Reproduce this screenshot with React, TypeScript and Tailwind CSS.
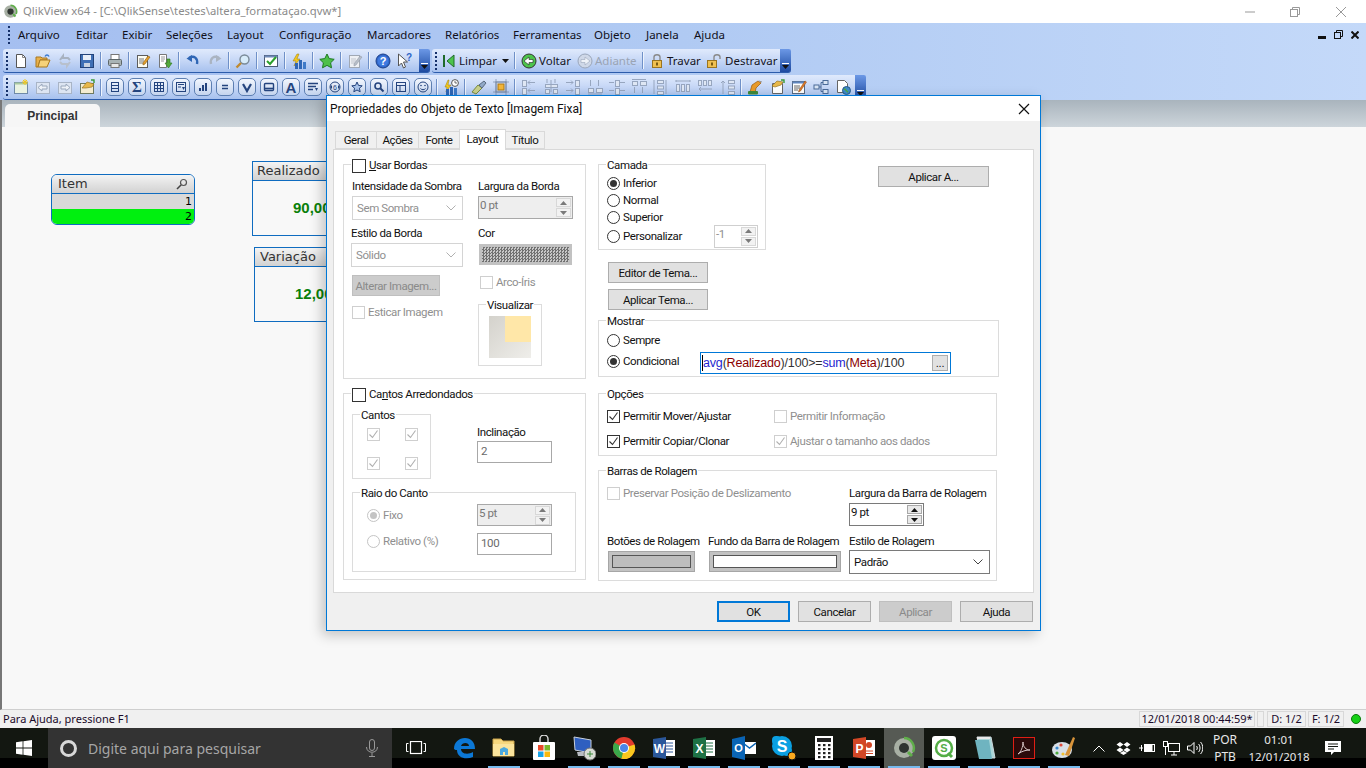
import React from 'react';

const W = ({ children, s = 16 }: { children: React.ReactNode; s?: number }) => (
  <svg width={s} height={s} viewBox={`0 0 ${s} ${s}`} fill="none">
    {children}
  </svg>
);

/* ---------- toolbar icons ---------- */
const icons: Record<string, React.ReactNode> = {
  new: <W><path d="M3.5 1.5h6l3 3v10h-9z" fill="#fff" stroke="#555" /><path d="M9.5 1.5v3h3" stroke="#888" /></W>,
  open: <W><path d="M1 4h5l1 1h5v2H5L3 14H1z" fill="#e8b04a" stroke="#a87820" /><path d="M3 14l2-7h10l-3 7z" fill="#f6d27a" stroke="#a87820" /><path d="M10 3.5c1-2 3-2 4 0" stroke="#3a7ad0" strokeWidth="1.4" /></W>,
  refresh: <W><path d="M3 7l3-4v2h5l2 2" stroke="#a8b2c0" strokeWidth="2" /><path d="M13 9l-3 4v-2H5L3 9" stroke="#b8c0cc" strokeWidth="2" /></W>,
  save: <W><rect x="1.5" y="1.5" width="13" height="13" fill="#3f6fb5" stroke="#23437a" /><rect x="4" y="2" width="8" height="5" fill="#e8eef8" /><rect x="5" y="10" width="6" height="4" fill="#c8d2e0" /></W>,
  print: <W><rect x="4" y="1.5" width="8" height="5" fill="#fff" stroke="#777" /><rect x="1.5" y="6.5" width="13" height="6" rx="1" fill="#a9b3b5" stroke="#5c6668" /><rect x="4" y="10.5" width="8" height="4" fill="#e8e8e8" stroke="#777" /></W>,
  notes: <W><rect x="2.5" y="2.5" width="10" height="12" fill="#fdfdf4" stroke="#5c5c5c" /><path d="M4 6h5M4 8h5M4 10h4" stroke="#777" /><path d="M8 10l5-7 2 1-5 7-2 1z" fill="#e6a02c" stroke="#8a5a10" strokeWidth=".6" /></W>,
  down: <W><path d="M2.5 1.5h7v13h-7z" fill="#fff" stroke="#777" /><path d="M4 4h4M4 6h4M4 8h3" stroke="#999" /><path d="M10 6h3v4h2l-3.5 5L8 10h2z" fill="#55a83c" stroke="#2c7a1a" strokeWidth=".6" /></W>,
  undo: <W><path d="M4 5c5-3 9 0 8 6" stroke="#2f66b5" strokeWidth="2.4" /><path d="M1.5 5.5L7 2v7z" fill="#2f66b5" /></W>,
  redo: <W><path d="M12 5C7 2 3 5 4 11" stroke="#aab4c2" strokeWidth="2.4" /><path d="M14.5 5.5L9 2v7z" fill="#aab4c2" /></W>,
  search: <W><circle cx="9.5" cy="6.5" r="4.5" fill="#d8ecfa" stroke="#7a8a98" strokeWidth="1.4" /><path d="M6 10l-4.5 4.5" stroke="#c08a30" strokeWidth="2.4" /></W>,
  check: <W><rect x="1.5" y="2.5" width="13" height="11" fill="#fff" stroke="#4a5a74" /><rect x="1.5" y="2.5" width="13" height="2" fill="#6f89b8" /><path d="M4 8l3 3 6-7" stroke="#2ca02c" strokeWidth="2" /></W>,
  bars: <W><path d="M6 1L2 8h3L3 13l6-7H6l2-5z" fill="#f2c81e" stroke="#9a7a10" strokeWidth=".5" /><rect x="4" y="10" width="3" height="6" fill="#2f66b5" /><rect x="8" y="7" width="3" height="9" fill="#2f66b5" /><rect x="12" y="9" width="3" height="7" fill="#3f7ac8" /></W>,
  star: <W><path d="M8 1l2.2 4.6 5 .7-3.6 3.5.9 5L8 12.4l-4.5 2.4.9-5L.8 6.3l5-.7z" fill="#4ec04a" stroke="#1f7a22" /></W>,
  edit: <W><rect x="2.5" y="2.5" width="10" height="12" fill="#eef0f4" stroke="#a0a8b4" /><path d="M4 6h5M4 8h5M4 10h4" stroke="#c0c4cc" /><path d="M7 11l6-8 2 1-6 8-2 1z" fill="#b8bec8" stroke="#8a92a0" strokeWidth=".5" /></W>,
  help: <W><circle cx="8" cy="8" r="7" fill="#2f66c8" stroke="#1c3f8a" /><circle cx="8" cy="8" r="5.4" fill="#3f7ae0" /><text x="8" y="12" textAnchor="middle" fontSize="11" fontWeight="700" fill="#fff" fontFamily="Liberation Sans">?</text></W>,
  whats: <W><path d="M1.5 1v12l3-3 2 5 2-1-2-5h4z" fill="#fff" stroke="#555" /><text x="12" y="8" textAnchor="middle" fontSize="10" fontWeight="700" fill="#2f66c8" fontFamily="Liberation Sans">?</text></W>,
  sheetNew: <W><rect x="1.5" y="3.5" width="13" height="11" fill="#eaf3e2" stroke="#6f8aa8" /><rect x="1.5" y="3.5" width="13" height="2" fill="#a8c8a0" /><path d="M12 0v6M9 3h6M10 1l4 4M14 1l-4 4" stroke="#f2c81e" /></W>,
  back: <W><rect x="1.5" y="3.5" width="13" height="11" fill="#dde5f2" stroke="#a8b4c6" /><path d="M3 8.5l4-3.5v2h5v3H7v2z" fill="#eef2f8" stroke="#9aa8bc" /></W>,
  forward: <W><rect x="1.5" y="3.5" width="13" height="11" fill="#dde5f2" stroke="#a8b4c6" /><path d="M13 8.5L9 5v2H4v3h5v2z" fill="#eef2f8" stroke="#9aa8bc" /></W>,
  sheetProps: <W><rect x="1.5" y="4.5" width="13" height="10" fill="#f4ecd0" stroke="#6f7a60" /><path d="M3 9l5-6 7 2-2 3-6 1z" fill="#e8b84a" stroke="#8a6a18" strokeWidth=".6" /><path d="M12 1h3v3" stroke="#3a9a3a" strokeWidth="1.4" /></W>,
  barsClock: <W><path d="M5 1L2 8h2L3 13l5-7H5l1-5z" fill="#f2c81e" stroke="#9a7a10" strokeWidth=".5" /><rect x="3" y="10" width="3" height="6" fill="#2f66b5" /><rect x="7" y="8" width="3" height="8" fill="#2f66b5" /><rect x="11" y="9" width="3" height="7" fill="#3f7ac8" /><circle cx="12" cy="4" r="3.4" fill="#fff" stroke="#555" /><path d="M12 2v2h2" stroke="#333" strokeWidth=".7" /></W>,
  brush: <W><path d="M1 13l6-7 4 3-6 6z" fill="#c8d08c" stroke="#7a8a40" /><path d="M8 6l5-4 2 2-4 5z" fill="#8fa8c8" stroke="#5a6a80" /></W>,
  select: <W><rect x="3" y="3" width="10" height="10" fill="none" stroke="#7a8aa8" /><rect x="5" y="5" width="6" height="6" fill="#f2b53a" stroke="#b07a10" /><path d="M3 0v16M13 0v16M0 3h16M0 13h16" stroke="#7a8aa8" strokeWidth=".7" /></W>,
  robot: <W><path d="M3 13l2-7 6-4 3 2-5 5-1 5z" fill="#e89a2a" stroke="#9a5a10" strokeWidth=".7" /><rect x="1" y="12" width="10" height="3.5" rx="1" fill="#3f8a3a" /><path d="M12 2l3 1" stroke="#999" /></W>,
  docTag: <W><path d="M3.5 4.5h10v10h-10z" fill="#fff" stroke="#666" /><path d="M3 7l5-5 6 1-2 3-6 2z" fill="#e8b84a" stroke="#8a6a18" strokeWidth=".6" /><path d="M12 1h3v3" stroke="#3a9a3a" strokeWidth="1.4" /></W>,
  formEdit: <W><rect x="1.5" y="2.5" width="12" height="12" fill="#fff" stroke="#5a6a80" /><rect x="1.5" y="2.5" width="12" height="2" fill="#5f86c0" /><path d="M3 7h6M3 9h6M3 11h4" stroke="#666" /><path d="M8 11l6-9 1.5 1-6 9-2 1z" fill="#e07a2a" stroke="#8a4a10" strokeWidth=".5" /></W>,
  nodes: <W><rect x="1" y="6" width="5" height="4" fill="#d8e4f4" stroke="#4a6a98" /><rect x="10" y="1.5" width="5" height="4" fill="#d8e4f4" stroke="#4a6a98" /><rect x="10" y="10.5" width="5" height="4" fill="#d8e4f4" stroke="#4a6a98" /><path d="M6 8h2V3.5h2M8 8v4.5h2" stroke="#4a6a98" /></W>,
  webDoc: <W><path d="M2.5 1.5h7l3 3v9h-10z" fill="#fff" stroke="#666" /><circle cx="11.5" cy="11.5" r="4" fill="#3f8ac8" stroke="#245a8a" /><path d="M9 10c2 0 2 2 4 3" stroke="#4caa3c" strokeWidth="1.4" /></W>,
};

const Ic = ({ n }: { n: string }) => (
  <span className="w-[22px] flex items-center justify-center shrink-0">{icons[n]}</span>
);

const Sep = () => (
  <span className="w-[6px] flex justify-center shrink-0">
    <span className="block w-[2px] h-[17px] border-l border-[#6f90c8] bg-[#eef4fd]" />
  </span>
);

const Grip = () => (
  <span className="w-[7px] flex flex-col items-center gap-[2px] shrink-0">
    <i className="block w-[2px] h-[2px] bg-[#15306a]" />
    <i className="block w-[2px] h-[2px] bg-[#15306a]" />
    <i className="block w-[2px] h-[2px] bg-[#15306a]" />
    <i className="block w-[2px] h-[2px] bg-[#15306a]" />
    <i className="block w-[2px] h-[2px] bg-[#15306a]" />
  </span>
);

const Overflow = () => (
  <span className="ml-auto w-[11px] self-stretch rounded-r-[2px] bg-linear-to-b from-[#6c98e6] to-[#1d4aa0] flex flex-col justify-end items-center pb-[3px] gap-[1px]">
    <i className="block w-[7px] h-px bg-white" />
    <svg width="7" height="4" viewBox="0 0 7 4"><path d="M0 0h7L3.5 4z" fill="#111" /></svg>
  </span>
);

/* object buttons of the third toolbar */
const ObjBtn = ({ children }: { children: React.ReactNode }) => (
  <span className="w-[22px] flex items-center justify-center shrink-0">
    <span className="w-[18px] h-[18px] rounded-[5px] border border-[#5d7fb2] bg-linear-to-b from-[#f2f6fd] to-[#c4d4ee] flex items-center justify-center">
      {children}
    </span>
  </span>
);

const ink = '#24447e';
const objGlyphs: React.ReactNode[] = [
  <W s={12}><rect x="2.5" y="1.5" width="7" height="9" stroke={ink} /><path d="M3 4.5h6M3 7.5h6" stroke={ink} /></W>,
  <span className="text-[15px] leading-none font-bold text-[#24447e] font-['Liberation_Serif',serif]">Σ</span>,
  <W s={12}><rect x="1.5" y="1.5" width="9" height="9" stroke={ink} /><path d="M4.5 2v8M7.5 2v8M2 4.5h8M2 7.5h8" stroke={ink} /></W>,
  <W s={12}><rect x="1.5" y="1.5" width="9" height="9" stroke={ink} /><path d="M3 3.5h6M3 6h3" stroke={ink} /><path d="M7 6h3l-1.5 3z" fill={ink} /></W>,
  <W s={12}><rect x="2" y="7" width="2" height="3" fill={ink} /><rect x="5" y="4" width="2" height="6" fill={ink} /><rect x="8" y="2" width="2" height="8" fill={ink} /></W>,
  <W s={12}><path d="M3 4.5h6M3 7.5h6" stroke={ink} strokeWidth="1.6" /></W>,
  <W s={12}><path d="M2 3l4 7 4-7" stroke={ink} strokeWidth="2.2" /></W>,
  <W s={12}><rect x="1.5" y="2.5" width="9" height="7" rx="1" stroke={ink} strokeWidth="1.4" /><path d="M2 7.5h8" stroke={ink} strokeWidth="1.6" /></W>,
  <span className="text-[15px] leading-none font-bold text-[#24447e] font-['Liberation_Sans',sans-serif]">A</span>,
  <W s={12}><path d="M1 2.5h10M1 5.5h8M1 8.5h5" stroke={ink} strokeWidth="1.4" /><path d="M8 7h3l-1.5 3z" fill={ink} /></W>,
  <W s={12}><circle cx="6" cy="6" r="5" stroke={ink} /><path d="M1 6l2-2v4zM11 6L9 4v4z" fill={ink} /><text x="6" y="9" textAnchor="middle" fontSize="7" fill={ink} fontFamily="Liberation Sans">6</text></W>,
  <W s={12}><path d="M6 1l1.5 3.4 3.7.4-2.8 2.4.8 3.6L6 9l-3.2 1.8.8-3.6L.8 4.8l3.7-.4z" stroke={ink} fill="#a9c3ea" /></W>,
  <W s={12}><circle cx="5" cy="5" r="3" stroke={ink} strokeWidth="1.6" /><path d="M7.5 7.5l3 3" stroke={ink} strokeWidth="2" /></W>,
  <W s={12}><rect x="1.5" y="1.5" width="9" height="9" stroke={ink} /><path d="M2 4.5h8M5 5v5" stroke={ink} /></W>,
  <W s={12}><circle cx="6" cy="6" r="5" stroke={ink} /><circle cx="4" cy="4.5" r=".8" fill={ink} /><circle cx="8" cy="4.5" r=".8" fill={ink} /><path d="M3.5 7.5c1 1.6 4 1.6 5 0" stroke={ink} /></W>,
];

/* alignment buttons, greyed out since nothing is selected */
const al = '#97a6bf';
const aligns: { r: number[][]; a: string }[] = [
  { r: [[1, 1, 4, 6], [1, 9, 4, 6]], a: 'M7 3.5h7M7 11.5h7M7 3.5l2-2M7 3.5l2 2M7 11.5l2-2M7 11.5l2 2' },
  { r: [[2, 5, 12, 3], [2, 10, 4, 4], [10, 10, 4, 4]], a: 'M4 0v4M12 0v4M8 1v12' },
  { r: [[10, 1, 4, 6], [10, 9, 4, 6]], a: 'M1 3.5h7M1 11.5h7M8 3.5L6 1.5M8 3.5L6 5.5M8 11.5l-2-2M8 11.5l-2 2' },
  { r: [[1, 9, 5, 4], [9, 9, 6, 4]], a: 'M3.5 1v6M11.5 1v6M1 15h14' },
  { r: [[6, 1, 4, 6], [6, 9, 4, 6]], a: 'M0 3.5h5M11 3.5h5M0 11.5h5M11 11.5h5' },
  { r: [[1, 2, 5, 4], [9, 2, 6, 4]], a: 'M1 .5h14M3.5 8v6M11.5 8v6' },
  { r: [[4, 1, 6, 3], [4, 6.5, 6, 3], [4, 12, 6, 3]], a: 'M1 1v14M13 1v14' },
  { r: [[1, 5, 3, 7], [6, 5, 3, 7], [11, 5, 3, 7]], a: 'M1 2h14M1 1v2M15 1v2' },
  { r: [[1, 1, 3, 5], [6, 1, 3, 5], [11, 1, 3, 5]], a: 'M2 10h13M2 10l2-2M2 10l2 2' },
  { r: [[9, 1, 6, 3], [9, 6.5, 6, 3], [9, 12, 6, 3]], a: 'M4 15V2M4 2L2 4M4 2l2 2' },
];
const AlignIcon = ({ r, a }: { r: number[][]; a: string }) => (
  <span className="w-[22px] flex items-center justify-center shrink-0">
    <W>
      {r.map((x, i) => (
        <rect key={i} x={x[0] + 0.5} y={x[1] + 0.5} width={x[2]} height={x[3]} fill="#dfe7f4" stroke={al} />
      ))}
      <path d={a} stroke={al} />
    </W>
  </span>
);

const Toolbar = ({ className, children }: { className: string; children: React.ReactNode }) => (
  <div className={`flex items-center rounded-[3px] border-b border-[#2c5cab] bg-linear-to-b from-[#e0eafc] via-[#c6d7f6] to-[#a7c1ee] ${className}`}>
    {children}
  </div>
);

const BarText = ({ children, dim, className = '' }: { children: React.ReactNode; dim?: boolean; className?: string }) => (
  <span className={`text-[11.5px] shrink-0 ${dim ? 'text-[#9aa4b4]' : 'text-[#14141e]'} ${className}`}>{children}</span>
);

const Lock = ({ open }: { open?: boolean }) => (
  <W>
    {open ? (
      <path d="M8 7V4c0-3 6-3 6 0v2" stroke="#8a8a8a" strokeWidth="1.4" />
    ) : (
      <path d="M5 7V4c0-3 6-3 6 0v3" stroke="#8a8a8a" strokeWidth="1.4" />
    )}
    <rect x={open ? 1.5 : 3.5} y="7.5" width="9" height="7" fill="#f0c050" stroke="#9a7420" />
    <rect x={open ? 5 : 7} y="9.5" width="2" height="3" fill="#7a5a10" />
  </W>
);

const NavCircle = ({ dir, on }: { dir: 'l' | 'r'; on?: boolean }) => (
  <svg width="16" height="16" viewBox="0 0 16 16">
    <circle cx="8" cy="8" r="7" fill={on ? '#4cc44c' : '#cfd8e8'} stroke={on ? '#333' : '#9aa6ba'} />
    <path d={dir === 'l' ? 'M3 8l5-4v2.5h4v3H8V12z' : 'M13 8L8 4v2.5H4v3h4V12z'} fill={on ? '#fff' : '#eef2f8'} stroke={on ? '#222' : '#9aa6ba'} strokeWidth=".6" />
  </svg>
);

/* ---------- dialog controls ---------- */
const Group = ({ title, className, children }: { title: React.ReactNode; className: string; children?: React.ReactNode }) => (
  <div className={`relative border border-[#dcdcdc] ${className}`}>
    <div className="absolute -top-[7px] left-[7px] bg-white px-px leading-[15px] flex items-center">{title}</div>
    {children}
  </div>
);

const Check = ({ on, dis, label, big }: { on?: boolean; dis?: boolean; label?: React.ReactNode; big?: boolean }) => (
  <div className={`flex items-center ${dis ? 'text-[#8f8f8f]' : 'text-[#111]'}`}>
    <span className={`${big ? 'w-[14px] h-[14px]' : 'w-[13px] h-[13px]'} shrink-0 border bg-white flex items-center justify-center ${dis ? 'border-[#cfcfcf]' : 'border-[#333]'}`}>
      {on && (
        <svg width="11" height="11" viewBox="0 0 11 11">
          <path d="M1.5 5.5l3 3 5-7" fill="none" stroke={dis ? '#b0b0b0' : '#333'} strokeWidth="1.1" />
        </svg>
      )}
    </span>
    {label && <span className="ml-[3px] whitespace-nowrap">{label}</span>}
  </div>
);

const Radio = ({ on, dis, label }: { on?: boolean; dis?: boolean; label: string }) => (
  <div className={`flex items-center ${dis ? 'text-[#8f8f8f]' : 'text-[#111]'}`}>
    <span className={`w-[13px] h-[13px] shrink-0 rounded-full border bg-white flex items-center justify-center ${dis ? 'border-[#c4c4c4]' : 'border-[#333]'}`}>
      {on && <i className={`block w-[7px] h-[7px] rounded-full ${dis ? 'bg-[#c4c4c4]' : 'bg-[#333]'}`} />}
    </span>
    <span className="ml-[3px] whitespace-nowrap">{label}</span>
  </div>
);

const Chevron = ({ dis }: { dis?: boolean }) => (
  <svg width="10" height="6" viewBox="0 0 10 6"><path d="M.5 .5L5 5 9.5 .5" fill="none" stroke={dis ? '#b0b0b0' : '#444'} /></svg>
);

const Select = ({ value, dis, className }: { value: string; dis?: boolean; className: string }) => (
  <div className={`flex items-center justify-between pl-[4px] pr-[6px] border bg-white ${dis ? 'border-[#d4d4d4] text-[#8f8f8f]' : 'border-[#7a7a7a] text-[#111]'} ${className}`}>
    <span>{value}</span>
    <Chevron dis={dis} />
  </div>
);

const Spin = ({ value, dis, grey, className }: { value: string; dis?: boolean; grey?: boolean; className: string }) => (
  <div className={`flex border ${grey ? 'border-[#a8a8a8] bg-[#eeeeee]' : 'bg-white'} ${dis ? 'border-[#cfcfcf] text-[#8f8f8f]' : ''} ${!dis && !grey ? 'border-[#7a7a7a] text-[#111]' : ''} ${grey ? 'text-[#777]' : ''} ${className}`}>
    <span className="flex-1 pl-[1px] leading-[17px]">{value}</span>
    <span className="w-[17px] flex flex-col justify-center gap-px pr-[1px] pl-[1px]">
      {['M0 4h7L3.5 0z', 'M0 0h7L3.5 4z'].map(d => (
        <span key={d} className={`h-[9px] flex items-center justify-center border ${grey || dis ? 'border-[#d8d8d8] bg-[#f2f2f2]' : 'border-[#a8a8a8] bg-[#e8e8e8]'}`}>
          <svg width="7" height="4" viewBox="0 0 7 4"><path d={d} fill={dis || grey ? '#7a7a7a' : '#111'} /></svg>
        </span>
      ))}
    </span>
  </div>
);

const Input = ({ value, dis, className }: { value: string; dis?: boolean; className: string }) => (
  <div className={`border border-[#a8a8a8] bg-white pl-[3px] leading-[18px] text-[#6a6a6a] ${dis ? 'text-[#8f8f8f]' : ''} ${className}`}>{value}</div>
);

const Btn = ({ label, dis, className }: { label: string; dis?: boolean; className: string }) => (
  <div className={`h-[21px] flex items-center justify-center whitespace-nowrap border ${dis ? 'bg-[#cccccc] border-[#bfbfbf] text-[#8a8a8a]' : 'bg-[#e1e1e1] border-[#adadad] text-[#111]'} ${className}`}>
    {label}
  </div>
);

const Swatch = ({ fill, className }: { fill: string; className: string }) => (
  <div className={`h-[21px] p-[3px] bg-[#c2c2c2] border border-[#a6a6a6] ${className}`}>
    <div className={`h-full border border-[#555] ${fill}`} />
  </div>
);

const tabs = [
  { t: 'Geral', w: 'w-[42px]' },
  { t: 'Ações', w: 'w-[43px]' },
  { t: 'Fonte', w: 'w-[42px]' },
  { t: 'Layout', w: 'w-[47px]', on: true },
  { t: 'Título', w: 'w-[40px]' },
];

const Dialog = () => (
  <div className="absolute left-[326px] top-[95px] w-[715px] h-[536px] border border-[#0078d7] bg-[#f0f0f0] flex flex-col text-[11.5px] tracking-[-0.4px] leading-[16px] font-['Roboto',sans-serif] shadow-[-4px_4px_12px_rgba(0,0,0,0.22)]">
    <div className="h-[25px] bg-white flex items-center justify-between pl-[3px] pr-[10px] shrink-0">
      <span className="text-[12px] tracking-normal text-[#111]">Propriedades do Objeto de Texto [Imagem Fixa]</span>
      <svg width="12" height="12" viewBox="0 0 12 12"><path d="M1 1l10 10M11 1L1 11" stroke="#111" strokeWidth="1.2" /></svg>
    </div>

    <div className="h-[20px] mt-[8px] pl-[9px] flex items-end shrink-0 relative z-10">
      {tabs.map(x => (
        <div
          key={x.t}
          className={`${x.w} -ml-px flex items-center justify-center border border-[#d9d9d9] text-[#111] ${x.on ? 'relative z-10 h-[21px] -mb-px bg-white border-b-0 pb-[3px]' : 'h-[18px] bg-[#f0f0f0]'}`}
        >
          {x.t}
        </div>
      ))}
    </div>

    <div className="h-[444px] mx-[6px] border border-[#d9d9d9] bg-white flex pl-[9px] pt-[14px] shrink-0">
      {/* left column */}
      <div className="w-[243px] shrink-0">
        <Group
          className="h-[215px] flex"
          title={<Check big label={<><u>U</u>sar Bordas</>} />}
        >
          <div className="w-[111px] ml-[8px] mt-[13px] shrink-0">
            <div className="h-[16px] text-[#111] whitespace-nowrap">Intensidade da Sombra</div>
            <Select dis value="Sem Sombra" className="h-[24px] mt-[2px]" />
            <div className="h-[16px] mt-[5px] -ml-px text-[#111]">Estilo da Borda</div>
            <Select dis value="Sólido" className="h-[24px] mt-[2px] -ml-px" />
            <Btn dis label="Alterar Imagem..." className="w-[88px] mt-[8px]" />
            <div className="mt-[8px]"><Check dis label="Esticar Imagem" /></div>
          </div>
          <div className="w-[95px] ml-[15px] mt-[13px] shrink-0">
            <div className="h-[16px] text-[#111] whitespace-nowrap">Largura da Borda</div>
            <Spin grey value="0 pt" className="h-[23px] mt-[2px]" />
            <div className="h-[16px] mt-[6px] text-[#111]">Cor</div>
            <div className="ml-px w-[93px] h-[21px] mt-[3px] p-[3px] bg-[#c2c2c2]">
              <div className="h-full bg-[repeating-conic-gradient(#707070_0_25%,#c8c8c8_0_50%)] bg-[length:3px_3px]" />
            </div>
            <div className="mt-[9px] ml-[2px]"><Check dis label="Arco-Íris" /></div>
            <Group className="w-[64px] h-[62px] mt-[14px] flex items-center justify-center" title={<span className="text-[#111]">Visualizar</span>}>
              <div className="w-[42px] h-[42px] mt-[4px] bg-linear-to-br from-[#d4d2cc] to-[#efeeea] pl-[16px] pb-[16px]">
                <div className="w-full h-full bg-[#ffe7a8]" />
              </div>
            </Group>
          </div>
        </Group>

        <Group
          className="h-[187px] mt-[14px] pl-[8px]"
          title={<Check big label={<>Ca<u>n</u>tos Arredondados</>} />}
        >
          <div className="flex mt-[20px]">
            <Group className="w-[79px] h-[65px] shrink-0 pl-[14px] pt-[13px]" title={<span className="text-[#111]">Cantos</span>}>
              <div className="grid grid-cols-[38px_13px] gap-y-[16px]">
                <Check dis on /><Check dis on /><Check dis on /><Check dis on />
              </div>
            </Group>
            <div className="ml-[46px] mt-[10px]">
              <div className="h-[16px] text-[#111]">Inclinação</div>
              <Input value="2" className="w-[75px] h-[22px] mt-px" />
            </div>
          </div>
          <Group className="w-[224px] h-[80px] mt-[13px] pl-[14px]" title={<span className="text-[#111]">Raio do Canto</span>}>
            <div className="flex items-center mt-[11px]">
              <div className="w-[110px]"><Radio dis on label="Fixo" /></div>
              <Spin grey value="5 pt" className="w-[75px] h-[22px]" />
            </div>
            <div className="flex items-center mt-[7px]">
              <div className="w-[110px] -mt-[6px]"><Radio dis label="Relativo (%)" /></div>
              <Input value="100" className="w-[75px] h-[22px]" />
            </div>
          </Group>
        </Group>
      </div>

      {/* right column */}
      <div className="ml-[12px] w-[401px] shrink-0">
        <div className="flex items-start">
          <Group className="w-[168px] h-[86px] pl-[8px] pt-[9px] shrink-0" title={<span className="text-[#111]">Camada</span>}>
            <div className="h-[18px] flex items-center"><Radio on label="Inferior" /></div>
            <div className="h-[16px] flex items-center"><Radio label="Normal" /></div>
            <div className="h-[18px] flex items-center"><Radio label="Superior" /></div>
            <div className="h-[20px] w-[151px] flex items-center justify-between">
              <Radio label="Personalizar" />
              <Spin dis value="-1" className="w-[44px] h-[23px]" />
            </div>
          </Group>
          <Btn label="Aplicar A..." className="w-[111px] ml-[112px] mt-[2px]" />
        </div>
        <Btn label="Editor de Tema..." className="w-[100px] ml-[10px] mt-[12px]" />
        <Btn label="Aplicar Tema..." className="w-[100px] ml-[10px] mt-[6px]" />

        <Group className="w-[401px] h-[57px] mt-[10px] pl-[8px] pt-[10px]" title={<span className="text-[#111]">Mostrar</span>}>
          <div className="h-[18px] flex items-center"><Radio label="Sempre" /></div>
          <div className="h-[22px] mt-[3px] flex items-center">
            <div className="w-[93px] -mt-[4px]"><Radio on label="Condicional" /></div>
            <div className="w-[251px] h-[22px] border border-[#0078d7] flex items-center justify-between pl-[1px] pr-[2px] font-['Liberation_Sans',sans-serif] text-[12.5px] tracking-[-0.18px]">
              <span className="border-l border-black text-[#333] whitespace-nowrap">
                <span className="text-[#1f1fd0]">avg</span>(<span className="text-[#8b0000]">Realizado</span>)/100&gt;=<span className="text-[#1f1fd0]">sum</span>(<span className="text-[#8b0000]">Meta</span>)/100
              </span>
              <span className="w-[16px] h-[16px] bg-[#e1e1e1] border border-[#adadad] flex items-center justify-center leading-none text-[11px] text-[#111]">...</span>
            </div>
          </div>
        </Group>

        <Group className="w-[399px] h-[63px] mt-[16px] pl-[8px] pt-[14px]" title={<span className="text-[#111]">Opções</span>}>
          <div className="grid grid-cols-[167px_auto] gap-y-[9px]">
            <Check on label="Permitir Mover/Ajustar" />
            <Check dis label="Permitir Informação" />
            <Check on label="Permitir Copiar/Clonar" />
            <Check dis on label="Ajustar o tamanho aos dados" />
          </div>
        </Group>

        <Group className="w-[399px] h-[111px] mt-[14px] pl-[8px]" title={<span className="text-[#111]">Barras de Rolagem</span>}>
          <div className="flex">
            <div className="w-[242px] mt-[14px] shrink-0"><Check dis label="Preservar Posição de Deslizamento" /></div>
            <div className="mt-[14px]">
              <div className="h-[16px] text-[#111] whitespace-nowrap">Largura da Barra de Rolagem</div>
              <Spin value="9 pt" className="w-[75px] h-[23px] mt-[2px]" />
            </div>
          </div>
          <div className="grid grid-cols-[101px_141px_auto] mt-[7px] text-[#111]">
            <div>
              <div className="h-[16px] whitespace-nowrap">Botões de Rolagem</div>
              <Swatch fill="bg-[#bdbdbd]" className="w-[87px] ml-px mt-[2px]" />
            </div>
            <div>
              <div className="h-[16px] whitespace-nowrap">Fundo da Barra de Rolagem</div>
              <Swatch fill="bg-white" className="w-[132px] ml-px mt-[2px]" />
            </div>
            <div>
              <div className="h-[16px] whitespace-nowrap">Estilo de Rolagem</div>
              <Select value="Padrão" className="w-[141px] h-[24px] mt-px" />
            </div>
          </div>
        </Group>
      </div>
    </div>

    <div className="mt-[8px] pr-[7px] flex justify-end gap-[8px] shrink-0">
      <Btn label="OK" className="w-[73px] !border-2 !border-[#0078d7]" />
      <Btn label="Cancelar" className="w-[73px]" />
      <Btn dis label="Aplicar" className="w-[73px]" />
      <Btn label="Ajuda" className="w-[73px]" />
    </div>
  </div>
);

/* ---------- sheet objects, free canvas ---------- */
const caption = 'bg-linear-to-b from-[#f4f4f4] via-[#e2e2e2] to-[#d2d2d2] border-b border-[#0f6cc0] text-[#333] font-[\'DejaVu_Sans\',sans-serif] text-[13px]';

const Sheet = () => (
  <div className="relative flex-1 bg-[#f8f8f8] border-l-2 border-[#777] border-b border-b-[#cfcfcf]">
    <div className="absolute left-[49px] top-[47px] w-[144px] h-[51px] rounded-[6px] overflow-hidden border border-[#0f6cc0] flex flex-col">
      <div className={`h-[19px] flex items-center justify-between px-[6px] shrink-0 ${caption}`}>
        <span>Item</span>
        <svg width="12" height="12" viewBox="0 0 12 12"><circle cx="7.5" cy="4.5" r="3" fill="none" stroke="#555" strokeWidth="1.2" /><path d="M5 7l-4 4" stroke="#444" strokeWidth="1.6" /></svg>
      </div>
      <div className="h-[15px] bg-[#d9d9d9] text-right pr-[2px] text-[11px] leading-[15px] font-['DejaVu_Sans',sans-serif]">1</div>
      <div className="flex-1 bg-[#00f00f] text-right pr-[2px] text-[11px] leading-[15px] font-['DejaVu_Sans',sans-serif]">2</div>
    </div>

    <div className="absolute left-[250px] top-[34px] w-[120px] h-[75px] border border-[#0f6cc0] flex flex-col">
      <div className={`h-[19px] flex items-center pl-[4px] ${caption}`}>Realizado</div>
      <div className="flex-1 flex items-center pl-[40px] pt-[1px] font-bold text-[15px] text-[#0a800a] font-['Liberation_Sans',sans-serif]">90,00</div>
    </div>
    <div className="absolute left-[252px] top-[120px] w-[120px] h-[75px] border border-[#0f6cc0] flex flex-col">
      <div className={`h-[19px] flex items-center pl-[5px] ${caption}`}>Variação</div>
      <div className="flex-1 flex items-center pl-[40px] pt-[1px] font-bold text-[15px] text-[#0a800a] font-['Liberation_Sans',sans-serif]">12,00</div>
    </div>
  </div>
);

/* ---------- taskbar ---------- */
const Tile = ({ bg, fg = '#fff', t, side = '#fff' }: { bg: string; fg?: string; t: string; side?: string }) => (
  <svg width="24" height="24" viewBox="0 0 24 24">
    <rect x="10" y="4" width="13" height="16" fill={side} />
    <path d="M13 7h8M13 10h8M13 13h8M13 16h8" stroke={bg} />
    <path d="M1 3l13-2v22L1 21z" fill={bg} />
    <text x="7.5" y="16.5" textAnchor="middle" fontSize="12" fontWeight="700" fill={fg} fontFamily="Liberation Sans">{t}</text>
  </svg>
);

const QlikMark = ({ s = 24 }: { s?: number }) => (
  <svg width={s} height={s} viewBox="0 0 24 24">
    <circle cx="12" cy="12" r="10" fill="#a8b0a4" />
    <path d="M12 2a10 10 0 0 1 9 14" fill="none" stroke="#5fae4a" strokeWidth="2.5" />
    <circle cx="12" cy="12" r="5" fill="#2e3430" />
    <path d="M16 16l4 4" stroke="#5fae4a" strokeWidth="3" />
  </svg>
);

const taskApps: { key: string; open?: boolean; on?: boolean; el: React.ReactNode }[] = [
  {
    key: 'edge',
    el: (
      <svg width="24" height="24" viewBox="0 0 24 24">
        <path d="M2 13C2 6 7 2 13 2c6 0 10 4 10 11H9c0 5 7 6 12 3v5c-7 3-16 1-16-7-1 0-2 0-3-1zm7-3h8c0-4-7-4-8 0z" fill="#0c78d6" />
      </svg>
    ),
  },
  {
    key: 'folder',
    open: true,
    el: (
      <svg width="24" height="24" viewBox="0 0 24 24">
        <path d="M1 3h8l2 2h11v15H1z" fill="#f6d77e" stroke="#c9a34a" />
        <path d="M1 8h21v12H1z" fill="#fbe49c" />
        <path d="M8 19v-6l4-2 4 2v6h-3v-3h-2v3z" fill="#4aa8de" />
      </svg>
    ),
  },
  {
    key: 'store',
    el: (
      <svg width="24" height="26" viewBox="0 0 24 26">
        <path d="M8 7V4a4 4 0 0 1 8 0v3" fill="none" stroke="#ddd" strokeWidth="1.4" />
        <rect x="1" y="7" width="22" height="18" rx="1" fill="#fff" />
        <rect x="6" y="10" width="5.5" height="5.5" fill="#e8492a" />
        <rect x="12.5" y="10" width="5.5" height="5.5" fill="#7ab92a" />
        <rect x="6" y="16.5" width="5.5" height="5.5" fill="#1aa4e8" />
        <rect x="12.5" y="16.5" width="5.5" height="5.5" fill="#fbb90c" />
      </svg>
    ),
  },
  {
    key: 'remote',
    open: true,
    el: (
      <svg width="24" height="26" viewBox="0 0 24 26">
        <path d="M2 2l17 3v13L3 15z" fill="#2e5fc0" stroke="#c8d0dc" />
        <path d="M5 17h12l2 4H6z" fill="#b8bcc2" />
        <circle cx="18" cy="19" r="6" fill="#d8dcd4" stroke="#777" />
        <path d="M15 19h6M18 16v6" stroke="#3a8a3a" />
      </svg>
    ),
  },
  {
    key: 'chrome',
    open: true,
    el: (
      <svg width="24" height="24" viewBox="0 0 24 24">
        <circle cx="12" cy="12" r="11" fill="#e23b2e" />
        <path d="M12 12L22.5 8.5A11 11 0 0 1 9 22.6z" fill="#f9c81e" />
        <path d="M12 12l-2.5 10.6A11 11 0 0 1 2.4 6.5z" fill="#3aa84a" />
        <circle cx="12" cy="12" r="5" fill="#fff" />
        <circle cx="12" cy="12" r="4" fill="#4a86e8" />
      </svg>
    ),
  },
  { key: 'word', open: true, el: <Tile bg="#2b579a" t="W" /> },
  { key: 'excel', open: true, el: <Tile bg="#1e7145" t="X" /> },
  {
    key: 'outlook',
    open: true,
    el: (
      <svg width="24" height="24" viewBox="0 0 24 24">
        <rect x="11" y="6" width="13" height="12" fill="#fff" />
        <path d="M11 7l6.5 5L24 7" fill="none" stroke="#0a64b4" strokeWidth="1.4" />
        <path d="M0 3l13-3v24L0 21z" fill="#0a64b4" />
        <text x="6.5" y="16" textAnchor="middle" fontSize="11" fontWeight="700" fill="#fff" fontFamily="Liberation Sans">O</text>
      </svg>
    ),
  },
  {
    key: 'skype',
    open: true,
    el: (
      <svg width="26" height="26" viewBox="0 0 26 26">
        <circle cx="11" cy="11" r="10" fill="#0ba0e2" />
        <rect x="1" y="1" width="9" height="9" rx="4" fill="#0ba0e2" />
        <rect x="12" y="12" width="9" height="9" rx="4" fill="#0ba0e2" />
        <text x="11" y="16.5" textAnchor="middle" fontSize="16" fontWeight="700" fill="#fff" fontFamily="Liberation Sans">S</text>
        <circle cx="21" cy="21" r="4" fill="#f9a81e" stroke="#111" />
      </svg>
    ),
  },
  {
    key: 'calc',
    open: true,
    el: (
      <svg width="18" height="24" viewBox="0 0 18 24">
        <rect width="18" height="24" fill="#fff" />
        <rect x="2" y="2" width="14" height="4" fill="#222" />
        {[8, 12, 16, 20].map(y => [3, 8, 13].map(x => <rect key={`${x}${y}`} x={x} y={y} width="2.5" height="2.2" fill="#222" />))}
      </svg>
    ),
  },
  {
    key: 'ppt',
    open: true,
    el: (
      <svg width="24" height="24" viewBox="0 0 24 24">
        <rect x="10" y="4" width="13" height="16" fill="#fff" />
        <circle cx="17" cy="9" r="3" fill="#d24726" />
        <path d="M13 15h8M13 17.5h8" stroke="#d24726" />
        <path d="M1 3l13-2v22L1 21z" fill="#d24726" />
        <text x="7.5" y="16.5" textAnchor="middle" fontSize="12" fontWeight="700" fill="#fff" fontFamily="Liberation Sans">P</text>
      </svg>
    ),
  },
  { key: 'qlik', open: true, on: true, el: <QlikMark /> },
  {
    key: 'sense',
    open: true,
    el: (
      <svg width="24" height="24" viewBox="0 0 24 24">
        <rect width="24" height="24" rx="3" fill="#fff" />
        <circle cx="12" cy="12" r="8" fill="none" stroke="#54ad46" strokeWidth="2.5" />
        <path d="M16 17l4 4" stroke="#54ad46" strokeWidth="3" />
        <text x="12" y="16" textAnchor="middle" fontSize="11" fontWeight="700" fill="#54ad46" fontFamily="Liberation Sans">S</text>
      </svg>
    ),
  },
  {
    key: 'note',
    open: true,
    el: (
      <svg width="24" height="24" viewBox="0 0 24 24">
        <path d="M5 1h14l4 21H9z" fill="#a9d6d8" stroke="#d0d8dc" />
        <path d="M3 4h14l3 19H7z" fill="#6fb4c0" />
        <path d="M5 1h13v2H5z" fill="#e8e8e8" />
      </svg>
    ),
  },
  {
    key: 'pdf',
    open: true,
    el: (
      <svg width="22" height="22" viewBox="0 0 22 22">
        <rect x=".5" y=".5" width="21" height="21" fill="#2b0a0a" stroke="#e01e14" />
        <path d="M5 17c3-2 5-7 5-12 0 5 3 8 7 8-4 0-8 1-12 4z" fill="none" stroke="#d8c8c8" />
      </svg>
    ),
  },
  {
    key: 'paint',
    open: true,
    el: (
      <svg width="26" height="26" viewBox="0 0 26 26">
        <ellipse cx="11" cy="15" rx="10" ry="8" fill="#d8e0e8" />
        <circle cx="6" cy="13" r="1.6" fill="#3a8ad0" />
        <circle cx="10" cy="10" r="1.6" fill="#e04a3a" />
        <circle cx="6" cy="18" r="1.6" fill="#4caa3c" />
        <circle cx="12" cy="19" r="1.6" fill="#f0c030" />
        <path d="M14 20L22 2l2 1-6 18z" fill="#d8943a" />
      </svg>
    ),
  },
];

const Taskbar = () => (
  <div className="h-[40px] bg-linear-to-b from-[#131711] from-75% to-black to-75% flex items-stretch text-white font-['Noto_Sans',sans-serif] shrink-0">
    <div className="w-[48px] flex items-center justify-center">
      <svg width="16" height="16" viewBox="0 0 16 16"><path d="M0 2.2L6.6 1.3v6.3H0zM7.4 1.2L16 0v7.6H7.4zM0 8.4h6.6v6.3L0 13.8zM7.4 8.4H16V16l-8.6-1.2z" fill="#fff" /></svg>
    </div>
    <div className="w-[344px] bg-[#333333] flex items-center pl-[12px]">
      <span className="w-[17px] h-[17px] rounded-full border-[3px] border-[#d8d8d8] shrink-0" />
      <span className="ml-[11px] flex-1 text-[14px] text-[#a6a6a6]">Digite aqui para pesquisar</span>
      <svg className="mr-[14px]" width="12" height="18" viewBox="0 0 12 18" fill="none" stroke="#9a9a9a"><rect x="3.5" y=".5" width="5" height="11" rx="2.5" /><path d="M.5 8c0 7 11 7 11 0M6 14v3.5M3 17.5h6" /></svg>
    </div>
    <div className="w-[48px] flex items-center justify-center">
      <svg width="20" height="14" viewBox="0 0 20 14" fill="none" stroke="#fff"><rect x="4.5" y=".5" width="11" height="12" strokeWidth="1.2" /><path d="M2.5 2.5H.5v8h2M17.5 2.5h2v8h-2" /></svg>
    </div>
    <div className="pl-[4px] flex">
      {taskApps.map(a => (
        <div key={a.key} className={`relative w-[40px] flex items-center justify-center ${a.on ? 'bg-[#565a54]' : ''}`}>
          {a.el}
          {a.open && <i className="absolute bottom-0 left-[4px] right-[4px] h-[2px] bg-[#76b9ed]" />}
        </div>
      ))}
    </div>
    <div className="w-[3px]" />
    <div className="w-[24px] flex items-center justify-center">
      <svg width="12" height="7" viewBox="0 0 12 7"><path d="M.5 6.5L6 1l5.5 5.5" fill="none" stroke="#fff" /></svg>
    </div>
    <div className="w-[24px] flex items-center justify-center">
      <svg width="15" height="13" viewBox="0 0 15 13"><path d="M4 0l3.5 2.5L4 5 .5 2.5zM11 0l3.5 2.5L11 5 7.5 2.5zM4 5.4l3.5 2.5L4 10.4.5 7.9zM11 5.4l3.5 2.5-3.5 2.5-3.5-2.5zM4 11l3.5-2 3.5 2-3.5 2z" fill="#fff" /></svg>
    </div>
    <div className="w-[24px] flex items-center justify-center">
      <svg width="17" height="12" viewBox="0 0 17 12" fill="none" stroke="#fff"><rect x="5.5" y="2.5" width="10" height="7" /><rect x="6" y="3" width="7" height="6" fill="#fff" /><path d="M0 6h4M2.5 3v6" /></svg>
    </div>
    <div className="w-[24px] flex items-center justify-center">
      <svg width="17" height="15" viewBox="0 0 17 15" fill="none" stroke="#fff"><rect x="5.5" y="2.5" width="11" height="8" /><rect x=".5" y=".5" width="4" height="5" fill="#131711" /><path d="M2.5 6v8M8 14h6M11 11v3" /></svg>
    </div>
    <div className="w-[24px] flex items-center justify-center">
      <svg width="16" height="14" viewBox="0 0 16 14" fill="none" stroke="#fff"><path d="M.5 5v4h3l3.5 3.5v-11L3.5 5z" /><path d="M9.5 5c1 1 1 3 0 4M11.5 3c2 2 2 6 0 8M13.5 1c3 3 3 9 0 12" /></svg>
    </div>
    <div className="w-[36px] flex flex-col items-center justify-center text-[12px] leading-[17px] text-[#e8e8e8]">
      <span>POR</span>
      <span>PTB</span>
    </div>
    <div className="w-[72px] flex flex-col items-center justify-center text-[11.5px] leading-[17px] text-[#e8e8e8]">
      <span>01:01</span>
      <span>12/01/2018</span>
    </div>
    <div className="w-[35px] flex items-center justify-center">
      <svg width="16" height="15" viewBox="0 0 16 15"><path d="M0 0h16v11H9l-3 3v-3H0z" fill="#fff" /><path d="M3 3h10M3 5.5h10M3 8h6" stroke="#131711" /></svg>
    </div>
  </div>
);

const StatusCell = ({ className, children }: { className: string; children?: React.ReactNode }) => (
  <div className={`h-[16px] border border-[#d8d8d8] flex items-center justify-center whitespace-nowrap ${className}`}>{children}</div>
);

export default function App() {
  return (
    <div className="relative w-[1366px] h-[768px] overflow-hidden flex flex-col bg-white text-[12px] font-['Noto_Sans',sans-serif]">
      {/* window title */}
      <div className="h-[23px] bg-white flex items-center pl-[3px] shrink-0">
        <QlikMark s={15} />
        <span className="ml-[5px] text-[11.3px] text-[#8a8a8a]">QlikView x64 - [C:\QlikSense\testes\altera_formataçao.qvw*]</span>
        <div className="ml-auto flex items-center text-[#9a9a9a]">
          <svg width="10" height="2" viewBox="0 0 10 2"><path d="M0 1h10" stroke="#999" /></svg>
          <svg className="ml-[35px]" width="10" height="10" viewBox="0 0 10 10" fill="none" stroke="#999"><rect x=".5" y="2.5" width="7" height="7" /><path d="M2.5 2.5v-2h7v7h-2" /></svg>
          <svg className="ml-[36px] mr-[20px]" width="10" height="10" viewBox="0 0 10 10"><path d="M0 0l10 10M10 0L0 10" stroke="#999" /></svg>
        </div>
      </div>

      {/* menu and toolbars share the blue band */}
      <div className="bg-linear-to-r from-[#a5bff0] via-[#b0caf3] to-[#c4d9f9] shrink-0">
        <div className="h-[23px] flex items-center pl-[5px]">
          <Grip />
          <div className="ml-[6px] grid grid-cols-[58px_46px_44px_61px_52px_88px_78px_68px_81px_52px_48px_auto] text-[11.5px] text-[#10101a]">
            {['Arquivo', 'Editar', 'Exibir', 'Seleções', 'Layout', 'Configuração', 'Marcadores', 'Relatórios', 'Ferramentas', 'Objeto', 'Janela', 'Ajuda'].map(m => (
              <span key={m}>{m}</span>
            ))}
          </div>
          <div className="ml-auto mr-[7px] flex items-center gap-[8px]">
            <svg width="8" height="3" className="mt-[5px]" viewBox="0 0 8 3"><path d="M0 0h8v3H0z" fill="#111" /></svg>
            <svg width="9" height="9" viewBox="0 0 9 9" fill="none" stroke="#111"><rect x=".5" y="2.5" width="6" height="6" /><path d="M2.5 2V.5h6v6H7" /></svg>
            <svg width="8" height="8" viewBox="0 0 8 8"><path d="M.5.5l7 7M7.5.5l-7 7" stroke="#111" strokeWidth="2" /></svg>
          </div>
        </div>

        <div className="h-[28px] flex pt-[3px] pb-px pl-[3px]">
          <Toolbar className="w-[427px]">
            <Grip />
            {['new', 'open', 'refresh', 'save', '|', 'print', '|', 'notes', 'down', '|', 'undo', 'redo', '|', 'search', '|', 'check', '|', 'bars', '|', 'star', '|', 'edit', '|', 'help', 'whats'].map((n, i) =>
              n === '|' ? <Sep key={i} /> : <Ic key={i} n={n} />,
            )}
            <Overflow />
          </Toolbar>
          <Toolbar className="w-[359px] ml-[2px]">
            <Grip />
            <span className="w-[20px] flex justify-center shrink-0">
              <svg width="14" height="14" viewBox="0 0 14 14"><path d="M2 1v12" stroke="#1f6a2a" strokeWidth="2" /><path d="M12 1L5 7l7 6z" fill="#4cc44c" stroke="#1f6a2a" /></svg>
            </span>
            <BarText className="w-[43px]">Limpar</BarText>
            <svg className="shrink-0" width="7" height="4" viewBox="0 0 7 4"><path d="M0 0h7L3.5 4z" fill="#111" /></svg>
            <span className="ml-[3px]"><Sep /></span>
            <span className="ml-[3px] mr-[2px]"><NavCircle dir="l" on /></span>
            <BarText className="w-[38px]">Voltar</BarText>
            <span className="mr-[2px]"><NavCircle dir="r" /></span>
            <BarText dim className="w-[45px]">Adiante</BarText>
            <Sep />
            <span className="ml-[3px] mr-[2px]"><Lock /></span>
            <BarText className="w-[39px]">Travar</BarText>
            <span className="mr-[3px]"><Lock open /></span>
            <BarText>Destravar</BarText>
            <Overflow />
          </Toolbar>
        </div>

        <div className="h-[26px] flex pt-px pl-[3px]">
          <Toolbar className="w-[863px]">
            <Grip />
            {['sheetNew', 'back', 'forward', 'sheetProps'].map(n => <Ic key={n} n={n} />)}
            <Sep />
            {objGlyphs.map((g, i) => <ObjBtn key={i}>{g}</ObjBtn>)}
            <Sep />
            <Ic n="barsClock" />
            <Sep />
            <Ic n="brush" />
            <Ic n="select" />
            <Sep />
            {aligns.map((x, i) => <AlignIcon key={i} r={x.r} a={x.a} />)}
            <Sep />
            {['robot', 'docTag', 'formEdit', 'nodes', 'webDoc'].map(n => <Ic key={n} n={n} />)}
            <Overflow />
          </Toolbar>
        </div>
      </div>

      {/* sheet tabs */}
      <div className="h-[27px] bg-linear-to-b from-[#a9b4bd] to-[#cdd5db] border-l-2 border-[#777] pl-[3px] flex items-end shrink-0">
        <div className="w-[95px] h-[23px] rounded-t-[5px] bg-[#f6f6f6] flex items-center justify-center font-bold text-[#333] font-['Liberation_Sans',sans-serif]">
          Principal
        </div>
      </div>

      <Sheet />

      {/* status bar */}
      <div className="h-[18px] bg-[#f0f0f0] flex items-center pl-[3px] text-[11px] shrink-0">
        <span className="text-[#1a0a2a]">Para Ajuda, pressione F1</span>
        <div className="ml-auto flex items-center gap-[2px] text-[#1a0a2a]">
          <StatusCell className="w-[116px]">12/01/2018 00:44:59*</StatusCell>
          <StatusCell className="w-[7px]" />
          <StatusCell className="w-[39px] ml-px">D: 1/2</StatusCell>
          <StatusCell className="w-[36px]">F: 1/2</StatusCell>
          <span className="w-[20px] flex justify-end pr-[5px]">
            <i className="block w-[10px] h-[10px] rounded-full bg-[#16d016] border border-[#0a7a0a]" />
          </span>
        </div>
      </div>

      <Taskbar />
      <Dialog />
    </div>
  );
}
